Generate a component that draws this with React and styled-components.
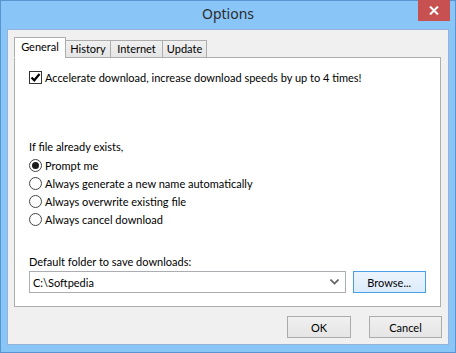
import styled, { createGlobalStyle } from 'styled-components'

const GlobalStyle = createGlobalStyle`
	html, body {
		margin: 0;
		padding: 0;
		background: #ffffff;
	}
	body {
		font-family: Lato, "Noto Sans", sans-serif;
		font-size: 11px;
		color: #000;
	}
	* {
		box-sizing: border-box;
	}
`

const tabs = [
	{ label: 'General', width: 52 },
	{ label: 'History', width: 46 },
	{ label: 'Internet', width: 53 },
	{ label: 'Update', width: 45 },
]
const options = [
	'Prompt me',
	'Always generate a new name automatically',
	'Always overwrite existing file',
	'Always cancel download',
]

// 옵션 대화상자 전체
const App = () => {
	return (
		<>
			<GlobalStyle />
			<Window>
				<TitleBar>
					<span />
					<Title>Options</Title>
					<CloseButton>
						<svg width="10" height="9" viewBox="0 0 10 9">
							<path d="M1 0.5 L9 8.5 M9 0.5 L1 8.5" stroke="#fff" strokeWidth="2" />
						</svg>
					</CloseButton>
				</TitleBar>
				<Client>
					<TabStrip>
						{tabs.map((tab, index) => (
							<Tab key={tab.label} $active={index === 0} $width={tab.width}>
								{tab.label}
							</Tab>
						))}
					</TabStrip>
					<Panel>
						<Row>
							<CheckBox>
								<svg width="11" height="11" viewBox="0 0 11 11">
									<path d="M1.5 5.5 L4.3 8.3 L9.5 2" fill="none" stroke="#000" strokeWidth="2.2" />
								</svg>
							</CheckBox>
							Accelerate download, increase download speeds by up to 4 times!
						</Row>
						<GroupLabel>If file already exists,</GroupLabel>
						{options.map((option, index) => (
							<Row key={option}>
								<Radio $checked={index === 0} />
								{option}
							</Row>
						))}
						<FolderLabel>Default folder to save downloads:</FolderLabel>
						<FolderRow>
							<Combo>
								<span>C:\Softpedia</span>
								<svg width="9" height="6" viewBox="0 0 9 6">
									<path d="M0.5 0.5 L4.5 4.5 L8.5 0.5" fill="none" stroke="#606060" strokeWidth="1.6" />
								</svg>
							</Combo>
							<Button $focused $width={74}>Browse...</Button>
						</FolderRow>
					</Panel>
					<ButtonRow>
						<Button $width={64}>OK</Button>
						<Button $width={73}>Cancel</Button>
					</ButtonRow>
				</Client>
			</Window>
		</>
	)
}

export default App

const Window = styled.div`
	width: 456px;
	height: 353px;
	border: 1px solid #5b93cf;
	background-color: #8ac5f8;
	display: flex;
	flex-direction: column;
`
const TitleBar = styled.div`
	height: 28px;
	display: grid;
	grid-template-columns: 1fr auto 1fr;
	align-items: start;
`
const Title = styled.div`
	font-family: "Noto Sans", sans-serif;
	font-size: 14px;
	color: #2b2b2b;
	line-height: 28px;
	margin-top: -1px;
`
const CloseButton = styled.div`
	justify-self: end;
	margin-top: -1px;
	margin-right: 5px;
	width: 32px;
	height: 21px;
	background-color: #c75050;
	display: flex;
	align-items: center;
	justify-content: center;
`
const Client = styled.div`
	flex: 1;
	margin: 0 6px 7px 6px;
	border: 1px solid #93b4d6;
	background-color: #f0f0f0;
	padding: 8px 7px 0 6px;
	display: flex;
	flex-direction: column;
`
const TabStrip = styled.div`
	display: flex;
	align-items: flex-end;
	height: 20px;
	margin-bottom: -1px;
	position: relative;
	z-index: 1;
`
const Tab = styled.div`
	width: ${(p) => p.$width}px;
	height: ${(p) => (p.$active ? '21px' : '18px')};
	border: 1px solid #adadad;
	border-bottom: ${(p) => (p.$active ? '1px solid #fff' : '1px solid #adadad')};
	background: ${(p) => (p.$active ? '#fff' : 'linear-gradient(#f0f0f0, #e5e5e5)')};
	padding-top: ${(p) => (p.$active ? '1px' : '0')};
	margin-left: ${(p) => (p.$active ? '0' : '-1px')};
	text-align: center;
	line-height: 16px;
	color: #000;
	white-space: nowrap;
`
const Panel = styled.div`
	height: 250px;
	border: 1px solid #adadad;
	background-color: #fff;
	padding: 10px 14px 0 14px;
	display: flex;
	flex-direction: column;
`
const Row = styled.div`
	height: 18px;
	display: flex;
	align-items: center;
	gap: 3px;
	white-space: nowrap;
`
const CheckBox = styled.div`
	width: 13px;
	height: 13px;
	border: 1px solid #333;
	background: #fff;
	display: flex;
	align-items: center;
	justify-content: center;
`
const Radio = styled.div`
	width: 13px;
	height: 13px;
	border-radius: 50%;
	border: 1px solid #444;
	background: #fff;
	display: flex;
	align-items: center;
	justify-content: center;
	&::after {
		content: '';
		display: ${(p) => (p.$checked ? 'block' : 'none')};
		width: 7px;
		height: 7px;
		border-radius: 50%;
		background: #1a1a1a;
	}
`
const GroupLabel = styled.div`
	margin-top: 52px;
	height: 18px;
	line-height: 18px;
`
const FolderLabel = styled.div`
	margin-top: 25px;
	height: 18px;
	line-height: 18px;
`
const FolderRow = styled.div`
	display: flex;
	gap: 7px;
	height: 22px;
`
const Combo = styled.div`
	width: 319px;
	height: 22px;
	border: 1px solid #abadb3;
	background: #fff;
	display: flex;
	align-items: center;
	justify-content: space-between;
	padding: 0 6px 0 3px;
`
const ButtonRow = styled.div`
	display: flex;
	justify-content: flex-end;
	gap: 18px;
	margin-top: 9px;
	margin-right: -1px;
`
const Button = styled.div`
	width: ${(p) => p.$width}px;
	height: 22px;
	border: 1px solid ${(p) => (p.$focused ? '#4aa0e8' : '#acacac')};
	background: ${(p) => (p.$focused ? 'linear-gradient(#ecf4fc, #dcecfc)' : 'linear-gradient(#f0f0f0, #e5e5e5)')};
	display: flex;
	align-items: center;
	justify-content: center;
	color: #000;
`
